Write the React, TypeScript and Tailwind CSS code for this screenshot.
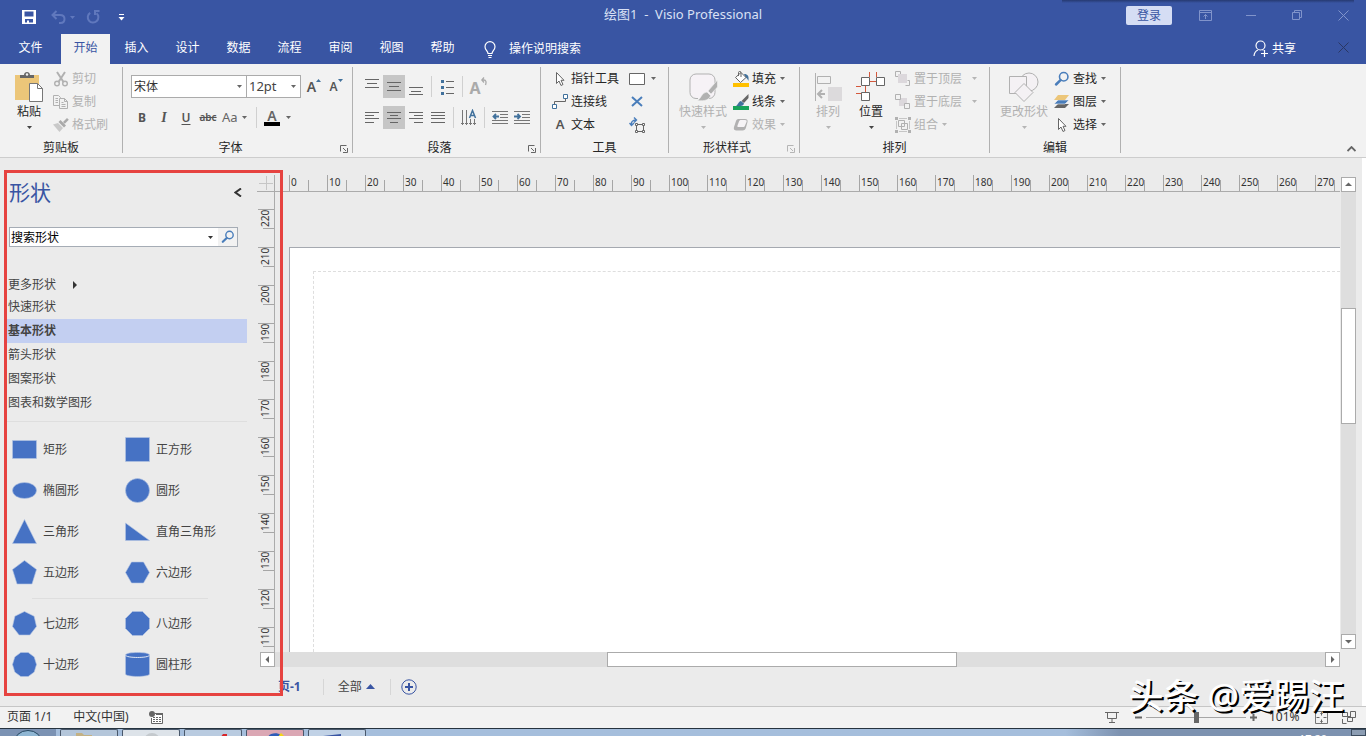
import type { ReactNode } from 'react'

const tabs = ['开始', '插入', '设计', '数据', '流程', '审阅', '视图', '帮助']
const stencils = ['基本形状', '箭头形状', '图案形状', '图表和数学图形']
const hMarks = Array.from({ length: 28 }, (_, i) => i * 10)
const vMarks = Array.from({ length: 12 }, (_, i) => 220 - i * 10)

type IconProps = { w?: number; h?: number; children: ReactNode }

function Icon({ w = 16, h = 16, children }: IconProps) {
  return (
    <svg width={w} height={h} viewBox={`0 0 ${w} ${h}`} fill="none" className="shrink-0" aria-hidden="true">
      {children}
    </svg>
  )
}

function Caret({ color = '#666' }: { color?: string }) {
  return (
    <svg width="5" height="3" viewBox="0 0 5 3" className="shrink-0" aria-hidden="true">
      <path d="M0 0h5L2.500 3z" fill={color} />
    </svg>
  )
}

function Group({ label, width, launcher, faded, children }: { label: string; width: string; launcher?: boolean; faded?: boolean; children: ReactNode }) {
  return (
    <section className={`flex shrink-0 flex-col border-r border-[#b1b1b1] ${width}`}>
      <div className="flex h-[69px]">{children}</div>
      <div className="flex flex-1 items-end">
        <h2 className="flex-1 text-center leading-[11px] text-[#262626]">{label}</h2>
        {launcher && (
          <button className="mr-0.5 flex h-[11px] w-3 items-end justify-center" aria-label={`${label}选项`}>
            <Icon w={8} h={8}>
              <path d="M.5 6.500V.5H6.500M3 3l3 3M7.500 3v4.500H3" stroke={faded ? '#b5b5b5' : '#666'} />
            </Icon>
          </button>
        )}
      </div>
    </section>
  )
}

function BigButton({ label, icon, width, disabled }: { label: string; icon: ReactNode; width: string; disabled?: boolean }) {
  return (
    <button disabled={disabled} className={`flex flex-col items-center pt-1 ${width} ${disabled ? 'text-[#b1b1b1]' : 'text-[#262626]'}`}>
      <span className="flex h-8 items-center">{icon}</span>
      <span className="pt-px leading-4 whitespace-nowrap">{label}</span>
      <span className="flex h-[14px] items-center">
        <Caret color={disabled ? '#b5b5b5' : '#444'} />
      </span>
    </button>
  )
}

function SmallButton({ label, icon, disabled, caret }: { label: string; icon: ReactNode; disabled?: boolean; caret?: boolean }) {
  return (
    <button disabled={disabled} className={`flex h-[23px] items-center whitespace-nowrap ${disabled ? 'text-[#b1b1b1]' : 'text-[#262626]'}`}>
      {icon}
      <span className="ml-[3px]">{label}</span>
      {caret && (
        <span className="ml-1">
          <Caret color={disabled ? '#b5b5b5' : '#666'} />
        </span>
      )}
    </button>
  )
}

function Tool({ label, active, children }: { label: string; active?: boolean; children: ReactNode }) {
  return (
    <button aria-label={label} className={`flex h-[23px] w-[22px] items-center justify-center text-[#555] ${active ? 'bg-[#c6c6c6]' : ''}`}>
      {children}
    </button>
  )
}

function Lines({ d }: { d: string }) {
  return (
    <Icon w={16} h={16}>
      <path d={d} stroke="#666" />
    </Icon>
  )
}

function Sep() {
  return <span className="mx-1 h-[21px] w-px bg-[#d0d0d0]" />
}

function Pointer() {
  return (
    <Icon>
      <path d="M4.500 1.500v11l2.500-2.500 2 4.500 2-1-2-4.200h3z" fill="#fff" stroke="#666" />
    </Icon>
  )
}

function Search({ size = 14 }: { size?: number }) {
  return (
    <svg width={size} height={size} viewBox="0 0 14 14" fill="none" className="shrink-0" aria-hidden="true">
      <circle cx="8.500" cy="5" r="3.700" stroke="#4a7ebb" strokeWidth="1.400" />
      <path d="M5.700 8L1.800 11.800" stroke="#4a7ebb" strokeWidth="2.200" strokeLinecap="round" />
    </svg>
  )
}

function TitleBar() {
  return (
    <header className="bg-[#3955a3] text-white">
      <div className="grid h-[34px] grid-cols-[1fr_auto_1fr]">
        <div className="flex items-center pl-[22px]">
          <button aria-label="保存">
            <Icon w={14} h={14}>
              <path fillRule="evenodd" d="M0 0h14v14H0zM2.500 1.500v5h9v-5zM3 9v3.500h2V10.500h2v2h4V9z" fill="#fff" />
            </Icon>
          </button>
          <button className="ml-[15px] flex items-center gap-1" aria-label="撤消">
            <Icon w={15} h={14}>
              <path d="M5.500 1L1.500 5l4 4M2 5h7c3 0 4.500 1.500 4.500 4S12 13 9.500 13H8" stroke="#6078bd" strokeWidth="2" />
            </Icon>
            <Caret color="#6078bd" />
          </button>
          <button className="ml-[11px]" aria-label="恢复">
            <Icon w={14} h={14}>
              <path d="M4.200 2.800A5.300 5.300 0 1 0 10.500 3.200M9 5V1h4.500" stroke="#6078bd" strokeWidth="2" />
            </Icon>
          </button>
          <button className="ml-[18px]" aria-label="自定义快速访问工具栏">
            <Icon w={7} h={7}>
              <path d="M1 .5h5" stroke="#fff" />
              <path d="M.5 3h6l-3 3.500z" fill="#fff" />
            </Icon>
          </button>
        </div>
        <h1 className="pt-[5px] text-[13px] leading-[18px] whitespace-pre text-[#d9e1f5]">绘图1  -  Visio Professional</h1>
        <div className="flex items-start justify-end">
          <button className="mt-[6px] mr-[10px] h-[19px] w-[46px] rounded-xs bg-[#d5ddf4] text-[#3955a3]">登录</button>
          <button className="flex h-[30px] w-[46px] items-center justify-center" aria-label="功能区显示选项">
            <Icon w={13} h={11}>
              <path d="M.5.5h12v10H.5zM.5 2.500h12M6.500 9V4.500M4.500 6.500l2-2 2 2" stroke="#8194cb" />
            </Icon>
          </button>
          <button className="flex h-[30px] w-[46px] items-center justify-center" aria-label="最小化">
            <Icon w={10} h={10}>
              <path d="M0 5.500h10" stroke="#8194cb" />
            </Icon>
          </button>
          <button className="flex h-[30px] w-[46px] items-center justify-center" aria-label="还原">
            <Icon w={10} h={10}>
              <path d="M.5 2.500h7v7h-7zM2.500 2.500v-2h7v7h-2" stroke="#8194cb" />
            </Icon>
          </button>
          <button className="flex h-[30px] w-[46px] items-center justify-center" aria-label="关闭">
            <Icon w={11} h={11}>
              <path d="M.5.5l10 10M10.500.5l-10 10" stroke="#8194cb" />
            </Icon>
          </button>
        </div>
      </div>
      <nav className="flex h-[30px] items-stretch">
        <button className="w-[60px] pb-0.5 pl-px">文件</button>
        {tabs.map((tab, i) => (
          <button key={tab} className={`mx-px w-[49px] pb-0.5 ${i === 0 ? 'bg-[#f2f2f2] text-[#3955a3]' : ''}`}>
            {tab}
          </button>
        ))}
        <button className="ml-4 flex items-center gap-[13px]">
          <Icon w={12} h={17}>
            <path d="M4 12.500c0-2.500-3-3.500-3-6.800a5 5 0 0 1 10 0c0 3.300-3 4.300-3 6.800zM4 14.500h4M4.500 16.500h3" stroke="#fff" strokeWidth="1.200" />
          </Icon>
          操作说明搜索
        </button>
        <button className="ml-auto flex items-center gap-[3px] pb-px">
          <Icon w={16} h={17}>
            <circle cx="7.500" cy="5.500" r="4.500" stroke="#fff" strokeWidth="1.200" />
            <path d="M1 16c.3-3.500 1.500-5 4-6M9.500 9.700l1 .5M8 13.500h7M11.500 10v7" stroke="#fff" strokeWidth="1.200" />
          </Icon>
          共享
        </button>
        <button className="ml-6 flex w-[46px] items-center justify-center pb-1" aria-label="关闭窗口">
          <Icon w={11} h={11}>
            <path d="M.5.5l10 10M10.500.5l-10 10" stroke="#2a3763" />
          </Icon>
        </button>
      </nav>
    </header>
  )
}

function ClipboardGroup() {
  return (
    <Group label="剪贴板" width="w-[123px]">
      <BigButton
        label="粘贴"
        width="ml-[5px] w-12"
        icon={
          <Icon w={28} h={30}>
            <path d="M0 3h24v25H0z" fill="#ecc679" />
            <path d="M5 6V3h4c0-4 6-4 6 0h4v3z" fill="#666" />
            <circle cx="12" cy="2.500" r="1.200" fill="#f2f2f2" />
            <path d="M14.500 11.500h8l5 5v13h-13z" fill="#fff" stroke="#777" />
            <path d="M22.500 11.500v5h5" stroke="#777" />
          </Icon>
        }
      />
      <div className="flex flex-col items-start">
        <SmallButton
          disabled
          label="剪切"
          icon={
            <Icon>
              <path d="M4 1l6.500 10M12 1L5.500 11" stroke="#b1b1b1" strokeWidth="2" />
              <circle cx="4" cy="12.500" r="2.300" stroke="#b1b1b1" strokeWidth="1.400" />
              <circle cx="12" cy="12.500" r="2.300" stroke="#b1b1b1" strokeWidth="1.400" />
            </Icon>
          }
        />
        <SmallButton
          disabled
          label="复制"
          icon={
            <Icon>
              <path d="M6 11.500H.5v-10h5l2 2V5M2.500 4.500H5M2.500 6.500H5M2.500 8.500H5" stroke="#b1b1b1" />
              <path d="M6.500 4.500h5l3 3v7h-8zM11.500 4.500v3h3M8.500 8.500h2M8.500 10.500h4M8.500 12.500h4" stroke="#b1b1b1" />
            </Icon>
          }
        />
        <SmallButton
          disabled
          label="格式刷"
          icon={
            <Icon>
              <path d="M0 7.500L5 6l5 5-3.500 4z" fill="#c9c9c9" />
              <path d="M5.500 5l2-2L13 8.500l-2 2z" fill="#aaa" />
              <path d="M10 5l4-4 1.800 1.800-4 4z" fill="#aaa" />
            </Icon>
          }
        />
      </div>
    </Group>
  )
}

function FontGroup() {
  return (
    <Group label="字体" width="w-[230px]" launcher>
      <div className="flex flex-col gap-2 pt-2 pl-2">
        <div className="flex h-[23px] items-center">
          <label className="relative">
            <select aria-label="字体" className="block h-[23px] w-[116px] appearance-none border border-[#ababab] bg-white pl-0.5 text-[#333]">
              <option>宋体</option>
            </select>
            <span className="pointer-events-none absolute inset-y-0 right-[5px] flex items-center"><Caret /></span>
          </label>
          <label className="relative -ml-px">
            <select aria-label="字号" className="block h-[23px] w-[55px] appearance-none border border-[#ababab] bg-white pl-0.5 text-[13px] text-[#444]">
              <option>12pt</option>
            </select>
            <span className="pointer-events-none absolute inset-y-0 right-[5px] flex items-center"><Caret /></span>
          </label>
          <Tool label="增大字号">
            <span className="ml-1 text-sm font-semibold">A</span>
            <span className="self-start pt-1"><Icon w={5} h={3}><path d="M0 3h5L2.500 0z" fill="#41719c" /></Icon></span>
          </Tool>
          <Tool label="减小字号">
            <span className="ml-1 text-xs font-semibold">A</span>
            <span className="self-start pt-1"><Caret color="#41719c" /></span>
          </Tool>
        </div>
        <div className="flex h-[23px] items-center">
          <Tool label="加粗"><span className="font-bold">B</span></Tool>
          <Tool label="倾斜"><span className="font-['Liberation_Serif',serif] text-sm font-bold italic">I</span></Tool>
          <Tool label="下划线"><span className="font-semibold underline underline-offset-2">U</span></Tool>
          <Tool label="删除线"><span className="text-[10px] font-semibold line-through">abc</span></Tool>
          <button className="ml-[3px] flex w-[30px] items-center gap-1 text-[13px] text-[#666]">Aa<Caret /></button>
          <Sep />
          <button className="ml-[3px] flex items-center gap-[6px]" aria-label="字体颜色">
            <span className="flex w-4 flex-col items-center text-sm leading-3 font-semibold text-[#666]">
              A
              <span className="h-1 w-4 bg-black" />
            </span>
            <Caret />
          </button>
        </div>
      </div>
    </Group>
  )
}

function ParagraphGroup() {
  return (
    <Group label="段落" width="w-[188px]" launcher>
      <div className="flex flex-col gap-2 pt-2 pl-2">
        <div className="flex h-[23px] items-center">
          <Tool label="顶端对齐"><Lines d="M1 .5h14M3 4.500h10M1 8.500h14" /></Tool>
          <Tool label="中部对齐" active><Lines d="M1 3.500h14M3 7.500h10M1 11.500h14" /></Tool>
          <Tool label="底端对齐"><Lines d="M1 8.500h14M3 12.500h10M1 15.500h14" /></Tool>
          <Sep />
          <Tool label="项目符号">
            <Icon w={14} h={16}>
              <path d="M6 2.500h8M6 8.500h8M6 14.500h8" stroke="#666" />
              <path d="M1 1h3v3H1zM1 7h3v3H1zM1 13h3v3H1z" fill="#41719c" />
            </Icon>
          </Tool>
          <Sep />
          <Tool label="旋转文本">
            <span className="self-end text-base leading-5 font-bold text-[#aaa]">A</span>
            <span className="self-start pt-0.5"><Icon w={6} h={10}><path d="M1 3h2c2 0 2.500 2 1.500 5M3 .5L.8 3 3 5.500" stroke="#aaa" strokeWidth="1.300" /></Icon></span>
          </Tool>
        </div>
        <div className="flex h-[23px] items-center">
          <Tool label="左对齐"><Lines d="M1 2.500h14M1 5.500h9M1 8.500h14M1 12.500h9" /></Tool>
          <Tool label="居中" active><Lines d="M1 2.500h14M4 5.500h8M1 8.500h14M4 12.500h8" /></Tool>
          <Tool label="右对齐"><Lines d="M1 2.500h14M6 5.500h9M1 8.500h14M6 12.500h9" /></Tool>
          <Tool label="两端对齐"><Lines d="M1 2.500h14M1 5.500h14M1 8.500h14M1 12.500h14" /></Tool>
          <Sep />
          <Tool label="文字方向">
            <Icon w={16} h={17}>
              <path d="M1.500 1v15M5.500 1v15M9.500 10v6M13.500 10v6M0 14.500h3M4 14.500h3M8 14.500h3M12 14.500h3" stroke="#777" />
              <path d="M8.500 9l3-7.500 3 7.500M9.500 6.500h4" stroke="#41719c" strokeWidth="1.500" />
            </Icon>
          </Tool>
          <Sep />
          <Tool label="减少缩进量">
            <Icon>
              <path d="M0 1.500h16M8 4.500h8M8 7.500h8M0 10.500h16M0 13.500h16" stroke="#777" />
              <path d="M7 6.500H1.500M4 4L1.500 6.500 4 9" stroke="#41719c" strokeWidth="1.800" />
            </Icon>
          </Tool>
          <Tool label="增加缩进量">
            <Icon>
              <path d="M0 1.500h16M8 4.500h8M8 7.500h8M0 10.500h16M0 13.500h16" stroke="#777" />
              <path d="M0 6.500h6M3.500 4L6 6.500 3.500 9" stroke="#41719c" strokeWidth="1.800" />
            </Icon>
          </Tool>
        </div>
      </div>
    </Group>
  )
}

function ToolsGroup() {
  return (
    <Group label="工具" width="w-[128px]">
      <div className="ml-[11px] flex w-[77px] flex-col items-start">
        <SmallButton label="指针工具" icon={<Pointer />} />
        <SmallButton
          label="连接线"
          icon={
            <Icon>
              <path d="M2.500 10.500V7.500h11v-3" stroke="#666" />
              <path d="M.5 10.500h4v4h-4zM11.500.5h4v4h-4z" stroke="#41719c" fill="#fff" />
            </Icon>
          }
        />
        <SmallButton label="文本" icon={<span className="w-4 text-center text-[13px] font-semibold text-[#555]">A</span>} />
      </div>
      <div className="flex flex-col items-start">
        <button className="flex h-[23px] items-center gap-[6px]" aria-label="矩形">
          <Icon w={16} h={12}><path d="M.5.5h15v11H.5z" fill="#fff" stroke="#666" /></Icon>
          <Caret />
        </button>
        <button className="flex h-[23px] items-center" aria-label="连接点">
          <Icon w={16} h={12}><path d="M3 1l10 9M13 1L3 10" stroke="#4a7ebb" strokeWidth="2" /></Icon>
        </button>
        <button className="flex h-[23px] items-center" aria-label="文本块">
          <Icon>
            <path d="M2.500 8C2 5 3.500 3 7 3M5 .5L7.500 3 5 5.500M.5 6l2 2.500L5 6" stroke="#4a7ebb" strokeWidth="1.400" />
            <path d="M7.500 7.500h7v7h-7z" stroke="#666" />
            <path d="M6.500 6.500h2v2h-2zM13.500 6.500h2v2h-2zM6.500 13.500h2v2h-2zM13.500 13.500h2v2h-2z" fill="#fff" stroke="#666" />
          </Icon>
        </button>
      </div>
    </Group>
  )
}

function StyleGroup() {
  return (
    <Group label="形状样式" width="w-[131px]" launcher faded>
      <BigButton
        disabled
        label="快速样式"
        width="ml-[6px] w-14"
        icon={
          <Icon w={30} h={30}>
            <path d="M10 26.500H8a6 6 0 0 1-6-6V8a6 6 0 0 1 6-6h13a6 6 0 0 1 6 6v12.500a6 6 0 0 1-6 6" fill="#f6f2f6" stroke="#b1b1b1" />
            <path d="M29.500 8v7l-6.500 7-3-3z" fill="#b1b1b1" stroke="#f2f2f2" strokeWidth=".6" />
            <path d="M19 20l3.500 3.500c-.5 4-5.500 6-13.500 5 4-1 4-7.500 10-8.500z" fill="#b1b1b1" stroke="#f2f2f2" strokeWidth=".6" />
          </Icon>
        }
      />
      <div className="ml-[2px] flex flex-col items-start">
        <SmallButton
          caret
          label="填充"
          icon={
            <Icon>
              <path d="M0 12h16v4H0z" fill="#ffc000" />
              <path d="M11 3c4 0 5 2 4.500 7-1-2-1.500-3-3-3.500z" fill="#41719c" />
              <path d="M8 1.500l5 5-5.500 5-5-5z" fill="#fff" stroke="#666" />
              <path d="M5.500 5V1.500c0-1.500 2.500-1.500 2.500 0V6" stroke="#666" />
            </Icon>
          }
        />
        <SmallButton
          caret
          label="线条"
          icon={
            <Icon>
              <path d="M0 12h16v4H0z" fill="#18a35a" />
              <path d="M15.500 0v4l-4.500 5-2.500-2z" fill="#666" />
              <path d="M8 7l3 2.500c0 2-3 3-8 2.500 2-1 2.500-4.500 5-5z" fill="#41719c" />
            </Icon>
          }
        />
        <SmallButton
          disabled
          caret
          label="效果"
          icon={
            <Icon>
              <path d="M1 10l2-6c.5-1.500 1.500-2 3-2h6c2 0 3 1 2.500 3l-1.500 5.500c-.5 2-1.500 3-3.500 3H3.500c-2 0-3.200-1-2.500-3.500z" fill="#b1b1b1" />
              <path d="M4.500 8.500L6 4.500C6.300 3.500 7 3 8 3h4c1.500 0 2 .8 1.500 2L12 8.500c-.3 1-1 1.500-2 1.500H6C4.500 10 4 9.500 4.500 8.500z" fill="#f6f4f6" />
            </Icon>
          }
        />
      </div>
    </Group>
  )
}

function ArrangeGroup() {
  return (
    <Group label="排列" width="w-[190px]">
      <BigButton
        disabled
        label="排列"
        width="ml-2 w-10"
        icon={
          <Icon w={28} h={28}>
            <path d="M1.500 0v28M3.500 3.500h13v7h-13z" stroke="#b1b1b1" />
            <path d="M14 14h14v14H14z" fill="#dcdadc" />
            <path d="M11 21H5M8 17l-4 4 4 4" stroke="#b1b1b1" strokeWidth="2" />
          </Icon>
        }
      />
      <BigButton
        label="位置"
        width="ml-[3px] w-10"
        icon={
          <Icon w={30} h={30}>
            <path d="M13.500 0v5M20.500 0v5M0 14.500h5M0 21.500h5M9.500 14v6M14 9.500h6" stroke="#d4583c" />
            <path d="M5.500 5.500h8v8h-8zM20.500 5.500h8v8h-8zM5.500 20.500h8v8h-8z" fill="#fff" stroke="#666" />
          </Icon>
        }
      />
      <div className="ml-1 flex flex-col items-stretch">
        <div className="flex items-center gap-[10px]">
          <SmallButton
            disabled
            label="置于顶层"
            icon={
              <Icon>
                <path d="M3.500 5.500h-3v-5h5v3M10.500 14.500h4v-5h-2" stroke="#b1b1b1" />
                <path d="M3 3h9v9H3z" fill="#dcd8dc" />
              </Icon>
            }
          />
          <Caret color="#b5b5b5" />
        </div>
        <div className="flex items-center gap-[10px]">
          <SmallButton
            disabled
            label="置于底层"
            icon={
              <Icon>
                <path d="M4 4h8v8H4z" fill="#dcd8dc" />
                <path d="M.5.5h5v5h-5zM9.500 9.500h5v5h-5z" fill="#f2f2f2" stroke="#b1b1b1" />
              </Icon>
            }
          />
          <Caret color="#b5b5b5" />
        </div>
        <SmallButton
          disabled
          caret
          label="组合"
          icon={
            <Icon>
              <path d="M4 1.500h8M4 14.500h8M1.500 4v8M14.500 4v8" stroke="#c6c6c6" />
              <path d="M3.500 3.500h6v6h-6zM6.500 6.500h6v6h-6z" stroke="#b1b1b1" />
              <path d="M0 0h3v3H0zM13 0h3v3h-3zM0 13h3v3H0zM13 13h3v3h-3z" fill="#b1b1b1" />
            </Icon>
          }
        />
      </div>
    </Group>
  )
}

function EditGroup() {
  return (
    <Group label="编辑" width="w-[131px]">
      <BigButton
        disabled
        label="更改形状"
        width="ml-[6px] w-14"
        icon={
          <Icon w={30} h={30}>
            <circle cx="20" cy="10" r="9" fill="#f4f1f4" stroke="#b1b1b1" />
            <path d="M.5 4.500h17v17H.5z" fill="#f4f1f4" stroke="#b1b1b1" />
            <path d="M15 11.500l9 9-9 9-9-9z" fill="#f4f1f4" stroke="#b1b1b1" />
          </Icon>
        }
      />
      <div className="ml-[2px] flex flex-col items-start">
        <SmallButton caret label="查找" icon={<Search size={16} />} />
        <SmallButton
          caret
          label="图层"
          icon={
            <Icon>
              <path d="M4 10h11l-4 4H0z" fill="#666" />
              <path d="M4 6h11l-4 4H0z" fill="#4a7ebb" stroke="#f2f2f2" strokeWidth=".6" />
              <path d="M4 1h11l-4 5H0z" fill="#ecc679" />
            </Icon>
          }
        />
        <SmallButton caret label="选择" icon={<Pointer />} />
      </div>
    </Group>
  )
}

function Ribbon() {
  return (
    <div className="flex h-[94px] border-b border-[#cdcdcd] bg-[#f2f2f2] pt-[3px] pb-1">
      <ClipboardGroup />
      <FontGroup />
      <ParagraphGroup />
      <ToolsGroup />
      <StyleGroup />
      <ArrangeGroup />
      <EditGroup />
      <button className="mr-[10px] ml-auto flex items-end pb-px" aria-label="折叠功能区">
        <Icon w={9} h={6}><path d="M.5 5l4-4 4 4" stroke="#666" strokeWidth="1.800" /></Icon>
      </button>
    </div>
  )
}

const shapes: { name: string; drawing: ReactNode }[] = [
  { name: '矩形', drawing: <path d="M.5 3.500h24v18H.5z" /> },
  { name: '正方形', drawing: <path d="M.5.5h24v24H.5z" /> },
  { name: '椭圆形', drawing: <ellipse cx="12.500" cy="12.500" rx="12" ry="8" /> },
  { name: '圆形', drawing: <circle cx="12.500" cy="12.500" r="12" /> },
  { name: '三角形', drawing: <path d="M12.500.5l12 24H.5z" /> },
  { name: '直角三角形', drawing: <path d="M.5 4l24 17.500H.5z" /> },
  { name: '五边形', drawing: <path d="M12.500.5l12 9-4.500 14.500H5L.5 9.500z" /> },
  { name: '六边形', drawing: <path d="M6.500 2h12l6 10.500-6 10.500h-12l-6-10.500z" /> },
  { name: '七边形', drawing: <path d="M12.500.5l9.600 4.700 2.400 10.300-6.600 8.500H7.100L.5 15.500 2.900 5.200z" /> },
  { name: '八边形', drawing: <path d="M7.500.5h10l7 7v10l-7 7h-10l-7-7v-10z" /> },
  { name: '十边形', drawing: <path d="M8.800.5h7.400l6 4.400 2.300 7.600-2.300 7.600-6 4.400H8.800l-6-4.400L.5 12.500l2.300-7.600z" /> },
  {
    name: '圆柱形',
    drawing: (
      <>
        <path d="M.5 3c0-3.300 24-3.300 24 0v19c0 3.300-24 3.300-24 0z" />
        <path d="M.5 3c0 3.300 24 3.300 24 0" stroke="#dfe6f3" strokeWidth="1" />
      </>
    ),
  },
]

function ShapeGrid({ items }: { items: typeof shapes }) {
  return (
    <ul className="grid grid-cols-[113px_1fr] pl-3">
      {items.map((shape) => (
        <li key={shape.name} className="flex h-[41px] items-center gap-[6px]">
          <svg width="25" height="25" viewBox="0 0 25 25" fill="#4672c4" stroke="#b4c4e2" strokeWidth=".6" className="mb-px" aria-hidden="true">
            {shape.drawing}
          </svg>
          {shape.name}
        </li>
      ))}
    </ul>
  )
}

function ShapesPanel() {
  return (
    <aside className="w-[257px] shrink-0 pt-5 text-[#444]">
      <div className="flex h-7 items-center justify-between pr-[15px] pl-[9px]">
        <h2 className="text-[21px] leading-7 text-[#3955a3]">形状</h2>
        <button aria-label="折叠形状窗口">
          <Icon w={8} h={9}><path d="M7 .5l-5.500 4L7 8.500" stroke="#333" strokeWidth="2" /></Icon>
        </button>
      </div>
      <div className="mt-[21px] mr-[19px] ml-[9px] flex h-5 items-center border border-[#a5acb5] bg-white">
        <input aria-label="搜索形状" defaultValue="搜索形状" className="h-full min-w-0 flex-1 bg-transparent pl-px text-black outline-none" />
        <Caret color="#333" />
        <button className="ml-[5px] flex h-full w-[19px] items-center justify-center bg-[#f2f2f2]" aria-label="开始搜索"><Search /></button>
      </div>
      <div className="mt-[26px] pl-2">
        <button className="flex h-[22px] items-center gap-[17px] pt-px">
          更多形状
          <Icon w={4} h={8}><path d="M0 0l4 4-4 4z" fill="#333" /></Icon>
        </button>
        <button className="block h-6">快速形状</button>
      </div>
      <ul>
        {stencils.map((name, i) => (
          <li key={name} className={`mr-[10px] ml-[7px] flex h-6 ${i === 0 ? 'bg-[#c3cff1] font-bold' : ''}`}>
            <button className="pl-px">{name}</button>
          </li>
        ))}
      </ul>
      <hr className="mt-[6px] mr-[10px] mb-[7px] ml-[7px] border-[#dedede]" />
      <ShapeGrid items={shapes.slice(0, 8)} />
      <hr className="mt-[5px] mr-[49px] mb-1 ml-8 border-[#dedede]" />
      <ShapeGrid items={shapes.slice(8)} />
    </aside>
  )
}

function ScrollButton({ label, d }: { label: string; d: string }) {
  return (
    <button aria-label={label} className="flex h-[15px] w-[15px] shrink-0 items-center justify-center border border-[#ababab] bg-white">
      <Icon w={7} h={7}><path d={d} fill="#666" /></Icon>
    </button>
  )
}

function Canvas() {
  return (
    <div className="flex min-w-0 flex-1 flex-col pt-[17px]">
      {/* horizontal ruler */}
      <div className="flex h-[17px] shrink-0 border-b border-[#ababab]">
        <div className="w-[18px] shrink-0 border-r border-[#ababab]">
          <Icon w={17} h={16}><path d="M9.500 1v14M2 8.500h14" stroke="#c6c6c6" /></Icon>
        </div>
        <div className="flex min-w-0 flex-1 overflow-hidden pl-[14px] text-[10px] leading-[14px] text-[#333]">
          {hMarks.map((n) => (
            <div key={n} className="flex w-[38px] shrink-0 items-end border-l border-[#a6a6a6]">
              <span className="w-[18px] self-start pl-px">{n}</span>
              <span className="h-[11px] w-px bg-[#a6a6a6]" />
            </div>
          ))}
        </div>
      </div>
      <div className="flex min-h-0 flex-1">
        {/* vertical ruler */}
        <div className="w-[18px] shrink-0 overflow-hidden border-r border-[#ababab] pt-[17px] text-[10px] leading-[14px] text-[#333]">
          {vMarks.map((n) => (
            <div key={n} className="ml-px flex h-[38px] flex-col items-end border-t border-[#a6a6a6]">
              <span className="flex h-[18px] rotate-180 justify-end self-start [writing-mode:vertical-rl]">{n}</span>
              <span className="h-px w-[11px] shrink-0 bg-[#a6a6a6]" />
            </div>
          ))}
        </div>
        <div className="min-w-0 flex-1 pt-[55px] pl-[14px]">
          <div className="h-full border-t border-l border-[#a5a9b0] bg-white pt-[23px] pl-[23px]">
            <div className="h-full border-t border-l border-dashed border-[#dedede]" />
          </div>
        </div>
      </div>
      <div className="flex h-[15px] shrink-0 pl-[3px]">
        <ScrollButton label="向左滚动" d="M5 0v7L1.500 3.500z" />
        <div className="flex flex-1 bg-[#dedede]">
          <span className="flex-[332]" />
          <span className="flex-[348] border border-[#ababab] bg-white" />
          <span className="flex-[368]" />
        </div>
        <ScrollButton label="向右滚动" d="M2 0v7l3.500-3.500z" />
      </div>
      <nav className="flex h-[39px] shrink-0 items-center pl-[21px]">
        <button className="font-bold text-[#3955a3]">页-1</button>
        <span className="ml-[22px] h-4 w-px bg-[#d6d6d6]" />
        <button className="ml-[14px] flex items-center gap-1 text-[#444]">
          全部
          <Icon w={9} h={5}><path d="M0 5h9L4.500 0z" fill="#3955a3" /></Icon>
        </button>
        <span className="ml-[15px] h-4 w-px bg-[#d6d6d6]" />
        <button className="ml-[10px]" aria-label="插入页">
          <Icon>
            <circle cx="8" cy="8" r="7.200" stroke="#3955a3" />
            <path d="M8 4v8M4 8h8" stroke="#3955a3" strokeWidth="2" />
          </Icon>
        </button>
      </nav>
    </div>
  )
}

function StatusBar() {
  return (
    <footer className="flex h-[22px] shrink-0 items-center border-t border-[#c6c6c6] bg-[#f2f2f2] pb-px text-[#333]">
      <span className="ml-[7px]">页面 1/1</span>
      <span className="ml-[21px]">中文(中国)</span>
      <button className="ml-5" aria-label="宏录制">
        <Icon w={14} h={13}>
          <path d="M6 2.500h7.500v10h-11V7" fill="#fff" stroke="#666" />
          <path d="M7 2h7v2H7z" fill="#666" />
          <path d="M4 6.500h2M7 6.500h2M10 6.500h2M4 8.500h2M7 8.500h2M10 8.500h2M4 10.500h2M7 10.500h2M10 10.500h2" stroke="#666" />
          <circle cx="3" cy="3" r="3" fill="#666" />
        </Icon>
      </button>
      <button className="ml-auto" aria-label="演示模式">
        <Icon w={14} h={12}>
          <path d="M0 1.500h14M2.500 2v5.500h9V2M7 8v3.500M4 11.500h6" stroke="#666" />
        </Icon>
      </button>
      <button className="ml-4 w-2" aria-label="缩小"><Icon w={7} h={7}><path d="M0 3.500h7" stroke="#666" strokeWidth="2" /></Icon></button>
      <input
        type="range"
        aria-label="缩放"
        min="0"
        max="100"
        defaultValue="50"
        className="ml-[3px] h-3 w-[100px] appearance-none bg-[linear-gradient(#a6a6a6,#a6a6a6)] bg-[length:100%_1px] bg-center bg-no-repeat [&::-webkit-slider-thumb]:h-[11px] [&::-webkit-slider-thumb]:w-[5px] [&::-webkit-slider-thumb]:appearance-none [&::-webkit-slider-thumb]:bg-[#666]"
      />
      <button className="ml-1 w-2" aria-label="放大"><Icon w={7} h={7}><path d="M0 3.500h7M3.500 0v7" stroke="#666" strokeWidth="2" /></Icon></button>
      <span className="ml-[11px] w-[46px]">101%</span>
      <button aria-label="适应窗口大小">
        <Icon w={13} h={13}>
          <path d="M.5.5h12v12H.5z" stroke="#777" />
          <path d="M6.500 1.500v3M6.500 8.500v3M1.500 6.500h3M8.500 6.500h3M5.500 3l1-1.500 1 1.500M5.500 10l1 1.500 1-1.500" stroke="#666" />
        </Icon>
      </button>
      <button className="mr-[10px] ml-[14px]" aria-label="切换窗口">
        <Icon w={14} h={13}>
          <path d="M.5 1.500h5v4h-5zM8.500.5h5v6h-5zM5 5.500h3M.5 8v4.500h4M5.500 6.500h5v4h-5z" stroke="#666" />
        </Icon>
      </button>
    </footer>
  )
}

// Only the top edge of the desktop task bar shows below the window.
function TaskBar() {
  return (
    <div className="flex h-2 shrink-0 gap-1 overflow-hidden border-t border-[#26333f] bg-linear-to-r from-[#a5bedc] from-78% to-[#7d92b0] to-82%">
      <div className="flex w-14 shrink-0 justify-center bg-[#7b92b3]">
        <Icon w={30} h={8}>
          <ellipse cx="15" cy="14" rx="14" ry="12.500" fill="#8fb6d3" stroke="#24465f" />
        </Icon>
      </div>
      <TaskItem tint="bg-[#b4c6da]"><path d="M15 3h6l2 2h8v3H15z" fill="#c3b184" /></TaskItem>
      <TaskItem tint="bg-[#dde3e9]"><circle cx="29" cy="11" r="8" fill="#c4c9cd" /></TaskItem>
      <TaskItem tint="bg-[#b9cbe0]"><path d="M35 8l3-4h4v4z" fill="#d8262a" /></TaskItem>
      <TaskItem tint="bg-[#dba7b4]">
        <path d="M21 8c0-5 9-6 13-3v3z" fill="#2e5cb8" />
        <path d="M30 8l4-5 5 5z" fill="#f5d713" />
      </TaskItem>
      <TaskItem tint="bg-[#c1d2e6]"><path d="M14 6l18-2v4H14z" fill="#3955a3" /></TaskItem>
      <span className="mr-5 ml-auto pt-1 text-[11px] leading-3 text-white">17:20</span>
      <span className="w-[15px] border border-[#3c4c5f] bg-[#8c9db3]" />
    </div>
  )
}

function TaskItem({ tint, children }: { tint: string; children: ReactNode }) {
  return (
    <div className={`w-[58px] shrink-0 rounded-t-xs border border-b-0 border-[#49586b] ${tint}`}>
      <Icon w={56} h={7}>{children}</Icon>
    </div>
  )
}

export default function App() {
  return (
    <div className="relative flex h-screen flex-col overflow-hidden bg-[#ebebeb] font-['Noto_Sans','Noto_Sans_CJK_SC',sans-serif] text-xs">
      <TitleBar />
      <div className="absolute top-0 right-3 h-[3px] w-[292px] bg-linear-to-b from-[#263a72] to-[#3955a3]" />
      <Ribbon />
      <main className="relative flex min-h-0 flex-1">
        <ShapesPanel />
        <Canvas />
        <div className="mr-[6px] flex w-4 flex-col pt-[19px] pb-[57px] pl-px">
          <ScrollButton label="向上滚动" d="M0 5h7L3.500 1.500z" />
          <div className="flex flex-1 flex-col bg-[#dedede]">
            <span className="flex-[116]" />
            <span className="flex-[114] border border-[#ababab] bg-white" />
            <span className="flex-[210]" />
          </div>
          <ScrollButton label="向下滚动" d="M0 2h7L3.500 5.500z" />
        </div>
        <div className="w-1 bg-white" />
        {/* highlight around the shapes window */}
        <div className="pointer-events-none absolute top-3 bottom-[10px] left-1 w-[279px] border-3 border-[#e64340]" />
      </main>
      <StatusBar />
      <TaskBar />
      <p className="pointer-events-none absolute right-[22px] bottom-5 text-[35px] leading-10 font-medium text-white [text-shadow:2px_2px_0_#000]">
        头条 @爱踢汪
      </p>
    </div>
  )
}
